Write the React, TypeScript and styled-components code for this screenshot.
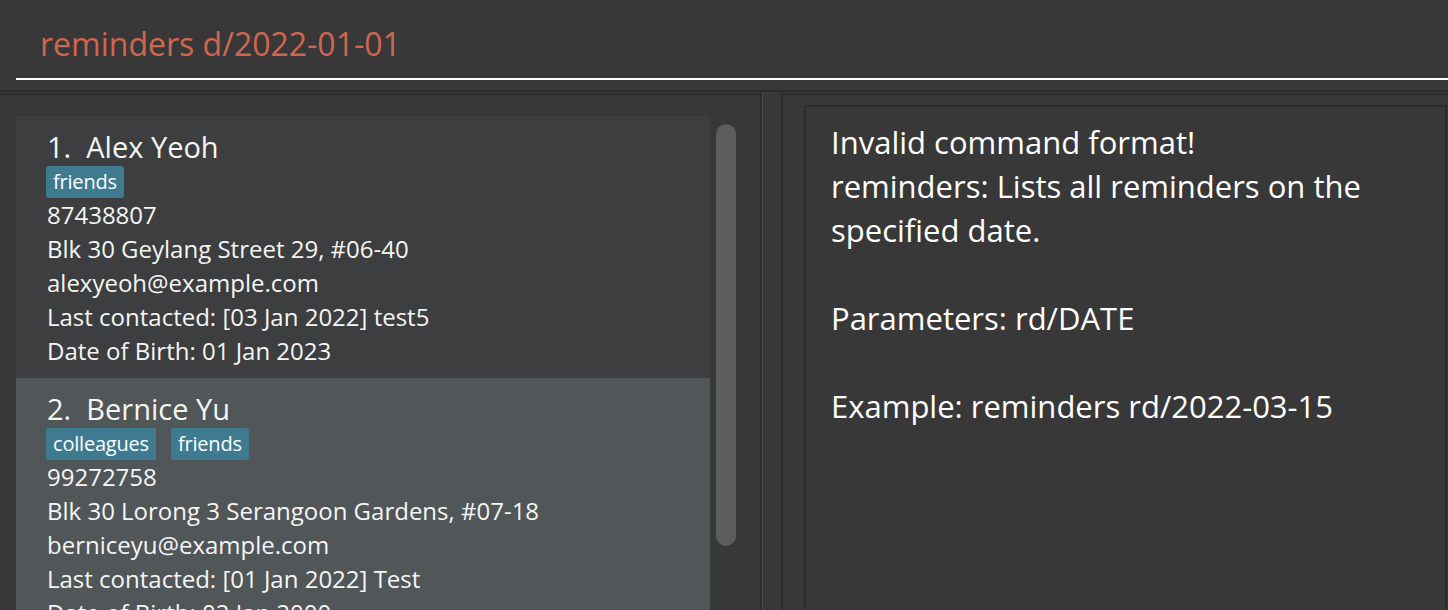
import React from "react";
import styled, { createGlobalStyle } from "styled-components";

const FONT = `"Open Sans", "Noto Sans", sans-serif`;

const Global = createGlobalStyle`
  html, body {
    margin: 0;
    padding: 0;
    background: #383838;
    overflow: hidden;
  }
  body {
    width: 1448px;
    height: 610px;
    font-family: ${FONT};
  }
`;

const Page = styled.div`
  width: 1448px;
  height: 610px;
  display: flex;
  flex-direction: column;
  background: #383838;
  overflow: hidden;
`;

const CommandArea = styled.div`
  height: 90px;
  flex: none;
  padding-left: 16px;
  box-sizing: border-box;
`;

const CommandInput = styled.div`
  height: 80px;
  box-sizing: border-box;
  border-bottom: 2px solid #ffffff;
  display: flex;
  align-items: center;
  padding: 8px 0 0 24px;
  color: #d06651;
  font-size: 32px;
`;

const TopRule = styled.div`
  height: 3px;
  flex: none;
  border-top: 2px solid #2b2b2b;
  background: #3a3a3a;
  box-sizing: border-box;
`;

const Split = styled.div`
  flex: 1;
  display: flex;
  min-height: 0;
`;

const LeftPane = styled.div`
  width: 762px;
  flex: none;
  box-sizing: border-box;
  border-top: 2px solid #2b2b2b;
  border-right: 2px solid #2b2b2b;
  padding: 21px 0 0 16px;
  display: flex;
  overflow: hidden;
`;

const Divider = styled.div`
  width: 1px;
  flex: none;
  background: #4a4a4a;
`;

const Gap = styled.div`
  width: 18px;
  flex: none;
`;

const RightPane = styled.div`
  flex: 1;
  box-sizing: border-box;
  border-top: 2px solid #2b2b2b;
  border-left: 2px solid #2b2b2b;
  padding: 10px 0 0 21px;
  display: flex;
  min-width: 0;
`;

const ResultBox = styled.div`
  width: 643px;
  flex: none;
  box-sizing: border-box;
  border-top: 2px solid #2b2b2b;
  border-left: 2px solid #2b2b2b;
  border-right: 2px solid #2b2b2b;
  padding: 13px 0 0 25px;
  color: #ffffff;
  font-size: 31px;
  line-height: 44px;
  white-space: pre-wrap;
`;

const CardList = styled.div`
  width: 694px;
  flex: none;
  display: flex;
  flex-direction: column;
`;

const Card = styled.div<{ $alt?: boolean }>`
  background: ${(p) => (p.$alt ? "#515658" : "#3c3e3f")};
  padding: 14px 0 10px 31px;
  display: flex;
  flex-direction: column;
  color: #f5f5f5;
`;

const Name = styled.div`
  font-size: 29px;
  line-height: 34px;
  white-space: pre;
`;

const TagRow = styled.div`
  display: flex;
  gap: 15px;
  margin-top: 2px;
  margin-left: -1px;
`;

const Tag = styled.span`
  background: #3e7b91;
  color: #ffffff;
  border-radius: 3px;
  height: 32px;
  line-height: 32px;
  padding: 0 7px;
  font-size: 20px;
  letter-spacing: -0.2px;
`;

const Line = styled.div`
  font-size: 24px;
  line-height: 34px;
  white-space: nowrap;
`;

const Track = styled.div`
  width: 32px;
  flex: none;
  padding: 8px 0 0 6px;
  box-sizing: border-box;
`;

const Thumb = styled.div`
  width: 20px;
  height: 422px;
  border-radius: 10px;
  background: #5d5d5d;
`;

type Person = {
  idx: number;
  name: string;
  tags: string[];
  phone: string;
  address: string;
  email: string;
  contacted: string;
  dob: string;
};

const people: Person[] = [
  {
    idx: 1,
    name: "Alex Yeoh",
    tags: ["friends"],
    phone: "87438807",
    address: "Blk 30 Geylang Street 29, #06-40",
    email: "alexyeoh@example.com",
    contacted: "[03 Jan 2022] test5",
    dob: "01 Jan 2023",
  },
  {
    idx: 2,
    name: "Bernice Yu",
    tags: ["colleagues", "friends"],
    phone: "99272758",
    address: "Blk 30 Lorong 3 Serangoon Gardens, #07-18",
    email: "berniceyu@example.com",
    contacted: "[01 Jan 2022] Test",
    dob: "02 Jan 2000",
  },
];

const result = `Invalid command format! 
reminders: Lists all reminders on the specified date.

Parameters: rd/DATE

Example: reminders rd/2022-03-15`;

export default function App() {
  return (
    <Page>
      <Global />
      <CommandArea>
        <CommandInput>reminders d/2022-01-01</CommandInput>
      </CommandArea>
      <TopRule />
      <Split>
        <LeftPane>
          <CardList>
            {people.map((p) => (
              <Card key={p.idx} $alt={p.idx % 2 === 0}>
                <Name>{`${p.idx}.  ${p.name}`}</Name>
                <TagRow>
                  {p.tags.map((t) => (
                    <Tag key={t}>{t}</Tag>
                  ))}
                </TagRow>
                <Line>{p.phone}</Line>
                <Line>{p.address}</Line>
                <Line>{p.email}</Line>
                <Line>Last contacted: {p.contacted}</Line>
                <Line>Date of Birth: {p.dob}</Line>
              </Card>
            ))}
          </CardList>
          <Track>
            <Thumb />
          </Track>
        </LeftPane>
        <Divider />
        <Gap />
        <RightPane>
          <ResultBox>{result}</ResultBox>
        </RightPane>
      </Split>
    </Page>
  );
}
